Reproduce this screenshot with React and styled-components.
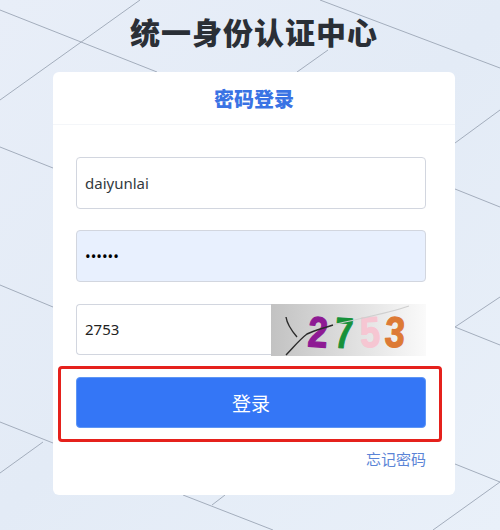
import styled, { createGlobalStyle } from "styled-components";

const GlobalStyle = createGlobalStyle`
  html, body {
    margin: 0;
    padding: 0;
  }
  body {
    background: #e7eef8;
    font-family: "Noto Sans", "Noto Sans CJK SC", sans-serif;
  }
`;

const Page = styled.div`
  position: relative;
  width: 500px;
  height: 530px;
  box-sizing: border-box;
  padding-left: 8px;
  overflow: hidden;
  display: flex;
  flex-direction: column;
  align-items: center;
  background: linear-gradient(135deg, #e8eef8 0%, #e3ebf6 50%, #e9f0f9 100%);
`;

const BackgroundLines = styled.svg`
  position: absolute;
  inset: 0;
`;

const Title = styled.h1`
  position: relative;
  margin: 11px 0 0;
  height: 61px;
  font-family: "Noto Sans CJK SC", sans-serif;
  font-size: 30px;
  line-height: 40px;
  font-weight: 900;
  letter-spacing: 1px;
  color: #2a2f36;
`;

const Card = styled.div`
  position: relative;
  width: 402px;
  height: 423px;
  background: #fff;
  border-radius: 6px;
`;

const CardHeader = styled.div`
  height: 53px;
  border-bottom: 1px solid #f4f6f9;
  box-sizing: border-box;
  display: flex;
  align-items: center;
  justify-content: center;
  font-family: "Noto Sans CJK SC", sans-serif;
  font-size: 20px;
  font-weight: 900;
  color: #3a73e4;
`;

const Form = styled.form`
  display: flex;
  flex-direction: column;
  gap: 21.6px;
  padding: 32.3px 29px 0 23px;
`;

const Input = styled.input`
  width: 350px;
  height: 51.6px;
  box-sizing: border-box;
  padding: 0 8px;
  border: 1px solid #d2d6df;
  border-radius: 4px;
  outline: none;
  font-family: "Noto Sans", "Noto Sans CJK SC", sans-serif;
  font-size: 15px;
  color: ${(props) => props.$color || "#333a40"};
  background: ${(props) => props.$fill || "#fff"};
`;

const CaptchaRow = styled.div`
  display: flex;
  width: 350px;
  height: 51.6px;
`;

const CaptchaInput = styled(Input)`
  width: 195px;
  border-right: none;
  border-radius: 4px 0 0 4px;
`;

const CaptchaImage = styled.svg`
  width: 155px;
  height: 52px;
  display: block;
  overflow: visible;
`;

const CaptchaDigit = styled.text`
  font-family: "Liberation Sans", sans-serif;
  font-size: 43px;
  font-weight: 700;
  stroke: ${(props) => props.fill};
  stroke-width: 1.2px;
  stroke-linejoin: round;
`;

const SubmitWrap = styled.div`
  position: relative;
  width: 350px;
  height: 51.6px;
`;

const Submit = styled.button`
  width: 100%;
  height: 100%;
  border: 1px solid #5e96f5;
  border-radius: 4px;
  background: #3476f6;
  color: #fff;
  font-family: "Noto Sans CJK SC", sans-serif;
  font-size: 19px;
  cursor: pointer;
`;

const Highlight = styled.div`
  position: absolute;
  left: -18px;
  top: -11px;
  width: 384px;
  height: 76px;
  box-sizing: border-box;
  border: 3.5px solid #e5211c;
  border-radius: 4px;
  pointer-events: none;
`;

const Forgot = styled.a`
  align-self: flex-end;
  margin-top: -1px;
  font-family: "Noto Sans CJK SC", sans-serif;
  font-size: 15px;
  line-height: 20px;
  color: #5b84d6;
  cursor: pointer;
`;

const lines = [
  [140, 0, 0, 100],
  [0, 10, 157, 72],
  [320, 0, 500, 68],
  [297, 72, 328, 50],
  [455, 143, 500, 110],
  [0, 147, 53, 168],
  [455, 189, 500, 207],
  [0, 285, 53, 307],
  [455, 327, 500, 345],
  [455, 327, 500, 297],
  [0, 422, 53, 443],
  [0, 473, 43, 442],
  [455, 464, 500, 482],
  [433, 530, 500, 482],
  [183, 495, 273, 530],
  [212, 505, 225, 495],
];

const digits = [
  { text: "2", x: 37, width: 20, y: 43, fill: "#8e1a94", rotate: 4 },
  { text: "7", x: 64, width: 18, y: 44, fill: "#17913a", rotate: 4 },
  { text: "5", x: 89, width: 20, y: 43, fill: "#f6c6d2", rotate: -3 },
  { text: "3", x: 114, width: 20, y: 43, fill: "#dd7a35", rotate: 4 },
];

const App = () => {
  return (
    <Page>
      <GlobalStyle />
      <BackgroundLines width="500" height="530" viewBox="0 0 500 530">
        {lines.map(([x1, y1, x2, y2]) => (
          <line
            key={`${x1}-${y1}-${x2}`}
            x1={x1}
            y1={y1}
            x2={x2}
            y2={y2}
            stroke="#a3adbc"
            strokeWidth="1"
          />
        ))}
      </BackgroundLines>
      <Title>统一身份认证中心</Title>
      <Card>
        <CardHeader>密码登录</CardHeader>
        <Form onSubmit={(e) => e.preventDefault()}>
          <Input readOnly value="daiyunlai" />
          <Input readOnly type="password" value="123456" $fill="#e8f0fe" $color="#000" />
          <CaptchaRow>
            <CaptchaInput readOnly value="2753" $color="#222" />
            <CaptchaImage viewBox="0 0 155 52">
              <defs>
                <linearGradient id="captchaBg" x1="0" x2="1" y1="0" y2="0">
                  <stop offset="0" stopColor="#c2c2c2" />
                  <stop offset="1" stopColor="#fafafa" />
                </linearGradient>
              </defs>
              <rect width="155" height="52" fill="url(#captchaBg)" />
              {digits.map((d) => (
                <CaptchaDigit
                  key={d.text}
                  x={d.x}
                  y={d.y}
                  fill={d.fill}
                  textLength={d.width}
                  lengthAdjust="spacingAndGlyphs"
                  transform={`rotate(${d.rotate} ${d.x + 10} ${d.y - 16})`}
                >
                  {d.text}
                </CaptchaDigit>
              ))}
              <path
                d="M15 13 C16 20 20 26 26 33"
                fill="none"
                stroke="#2b2b2b"
                strokeWidth="1.4"
              />
              <path
                d="M15 51 C22 44 28 36 36 30 C44 26 50 25 62 21"
                fill="none"
                stroke="#2b2b2b"
                strokeWidth="1.4"
              />
              <path
                d="M62 21 C85 15 115 10 138 2"
                fill="none"
                stroke="#cfcfcf"
                strokeWidth="1.2"
              />
            </CaptchaImage>
          </CaptchaRow>
          <SubmitWrap>
            <Submit type="submit">登录</Submit>
            <Highlight />
          </SubmitWrap>
          <Forgot>忘记密码</Forgot>
        </Form>
      </Card>
    </Page>
  );
};

export default App;
